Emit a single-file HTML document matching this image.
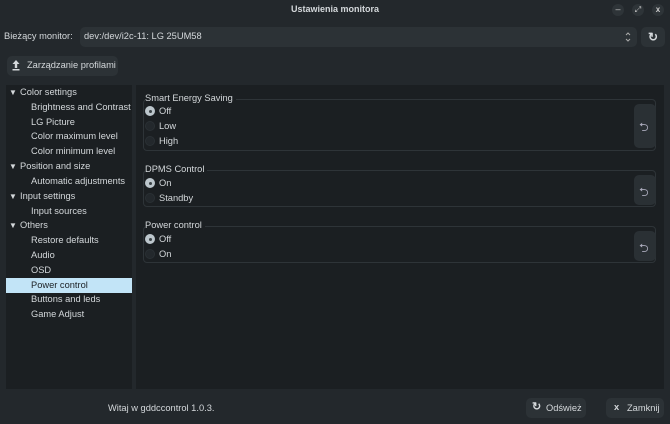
<!DOCTYPE html>
<html><head><meta charset="utf-8"><style>
*{margin:0;padding:0;box-sizing:border-box}
body{width:670px;height:424px;background:#23282c;font-family:"Liberation Sans",sans-serif;font-size:9.3px;color:#d4d8db;position:relative;overflow:hidden}
.a{position:absolute;white-space:nowrap}
.btn{position:absolute;background:#2c3236;border-radius:5px}
.tree{left:6px;top:85px;width:126px;height:304px;background:#1b1f22}
.main{left:136px;top:85px;width:528px;height:304px;background:#1b1f22}
.row{position:absolute;left:0;width:126px;height:15px;line-height:15px}
.frame{position:absolute;left:143px;width:513px;border:1px solid #2e3438;border-radius:4px}
.lbl{position:absolute;left:145px;background:#1b1f22;padding-right:3px;line-height:11px}
.rad{position:absolute;left:145px;width:10px;height:10px;border-radius:50%;background:#23282c;border:1px solid #2a3034}
.rad.on{background:#bcc6cc;border-color:#bcc6cc}
.rad.on::after{content:"";position:absolute;left:2.5px;top:2.5px;width:3px;height:3px;border-radius:50%;background:#3a4246}
.rt{position:absolute;left:159px;line-height:11px}
.rst{position:absolute;left:634px;width:22px;background:#2a3034;border-radius:5px}
</style></head><body>
<div class="a" style="left:0;width:670px;top:4px;text-align:center;font-weight:bold;font-size:9px">Ustawienia monitora</div>
<div class="a" style="left:612px;top:4px;width:12px;height:12px;border-radius:50%;background:#2e3438;color:#ccc;text-align:center;line-height:11px;font-size:9px">–</div>
<div class="a" style="left:632px;top:4px;width:12px;height:12px;border-radius:50%;background:#2e3438;color:#ccc;text-align:center;line-height:12px;font-size:8px">⤢</div>
<div class="a" style="left:652px;top:4px;width:12px;height:12px;border-radius:50%;background:#2e3438;color:#ccc;text-align:center;line-height:12px;font-size:8px;font-weight:bold">x</div>

<div class="a" style="left:4px;top:31px">Bieżący monitor:</div>
<div class="btn" style="left:80px;top:27px;width:557px;height:20px"></div>
<div class="a" style="left:84px;top:31px">dev:/dev/i2c-11: LG 25UM58</div>
<svg class="a" style="left:624px;top:31px" width="8" height="12"><path d="M2 4 L4 2 L6 4 M2 8 L4 10 L6 8" stroke="#aaa" fill="none" stroke-width="1"/></svg>
<div class="btn" style="left:641px;top:27px;width:24px;height:20px;text-align:center;line-height:20px;font-size:12px;font-weight:bold">↻</div>

<div class="btn" style="left:7px;top:56px;width:111px;height:20px"></div>
<svg class="a" style="left:11px;top:59px" width="10" height="12"><path d="M5 1 L1.5 5 H3.8 V9 H6.2 V5 H8.5 Z" fill="#d4d8db"/><rect x="1.5" y="10" width="7" height="1.5" fill="#d4d8db"/></svg>
<div class="a" style="left:27px;top:60px">Zarządzanie profilami</div>

<div class="a tree">
<div class="row" style="top:0"><span style="position:absolute;left:3px;font-size:8px">▼</span><span style="position:absolute;left:14px">Color settings</span></div>
<div class="row" style="top:15px;padding-left:25px">Brightness and Contrast</div>
<div class="row" style="top:30px;padding-left:25px">LG Picture</div>
<div class="row" style="top:44px;padding-left:25px">Color maximum level</div>
<div class="row" style="top:59px;padding-left:25px">Color minimum level</div>
<div class="row" style="top:74px"><span style="position:absolute;left:3px;font-size:8px">▼</span><span style="position:absolute;left:14px">Position and size</span></div>
<div class="row" style="top:89px;padding-left:25px">Automatic adjustments</div>
<div class="row" style="top:104px"><span style="position:absolute;left:3px;font-size:8px">▼</span><span style="position:absolute;left:14px">Input settings</span></div>
<div class="row" style="top:119px;padding-left:25px">Input sources</div>
<div class="row" style="top:133px"><span style="position:absolute;left:3px;font-size:8px">▼</span><span style="position:absolute;left:14px">Others</span></div>
<div class="row" style="top:148px;padding-left:25px">Restore defaults</div>
<div class="row" style="top:163px;padding-left:25px">Audio</div>
<div class="row" style="top:178px;padding-left:25px">OSD</div>
<div class="row" style="top:193px;padding-left:25px;background:#c2e4f7;color:#1c2024">Power control</div>
<div class="row" style="top:207px;padding-left:25px">Buttons and leds</div>
<div class="row" style="top:222px;padding-left:25px">Game Adjust</div>
</div>

<div class="a main"></div>

<div class="frame" style="top:99px;height:52px"></div>
<div class="lbl" style="top:93px">Smart Energy Saving</div>
<div class="rad on" style="top:106px"></div><div class="rt" style="top:106px">Off</div>
<div class="rad" style="top:121px"></div><div class="rt" style="top:121px">Low</div>
<div class="rad" style="top:136px"></div><div class="rt" style="top:136px">High</div>
<div class="rst" style="top:104px;height:44px"></div>
<div class="a" style="left:639px;top:118px;font-size:12px;color:#aab">⮌</div>

<div class="frame" style="top:170px;height:37px"></div>
<div class="lbl" style="top:164px">DPMS Control</div>
<div class="rad on" style="top:178px"></div><div class="rt" style="top:178px">On</div>
<div class="rad" style="top:193px"></div><div class="rt" style="top:193px">Standby</div>
<div class="rst" style="top:175px;height:30px"></div>
<div class="a" style="left:639px;top:183px;font-size:12px;color:#aab">⮌</div>

<div class="frame" style="top:226px;height:37px"></div>
<div class="lbl" style="top:220px">Power control</div>
<div class="rad on" style="top:234px"></div><div class="rt" style="top:234px">Off</div>
<div class="rad" style="top:249px"></div><div class="rt" style="top:249px">On</div>
<div class="rst" style="top:231px;height:30px"></div>
<div class="a" style="left:639px;top:239px;font-size:12px;color:#aab">⮌</div>

<div class="a" style="left:108px;top:403px">Witaj w gddccontrol 1.0.3.</div>
<div class="btn" style="left:526px;top:398px;width:60px;height:20px"></div>
<div class="a" style="left:532px;top:400px;font-size:11px;font-weight:bold">↻</div>
<div class="a" style="left:546px;top:403px">Odśwież</div>
<div class="btn" style="left:606px;top:398px;width:58px;height:20px"></div>
<div class="a" style="left:614px;top:402px;font-weight:bold">x</div>
<div class="a" style="left:627px;top:403px">Zamknij</div>
</body></html>
